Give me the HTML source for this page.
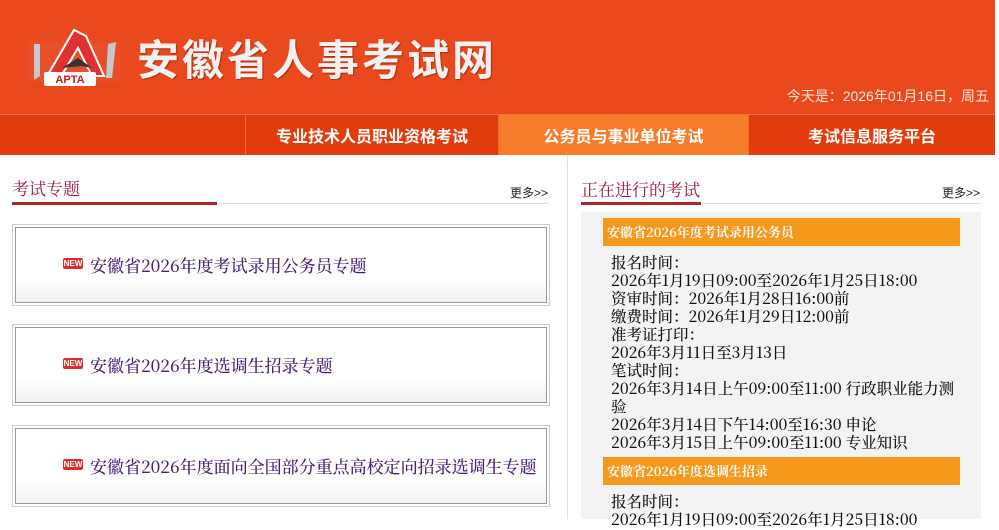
<!DOCTYPE html>
<html><head><meta charset="utf-8"><style>
*{margin:0;padding:0;box-sizing:border-box}
body{width:999px;height:519px;overflow:hidden;background:#fff;font-family:"Liberation Sans","Noto Sans CJK SC",sans-serif;position:relative}
.hdr{position:absolute;left:0;top:0;width:995px;height:114px;background:#e9491c}
.title{position:absolute;left:137px;top:30px;font-size:42px;font-weight:bold;color:#f4f0f0;letter-spacing:3px;font-family:"Noto Sans CJK SC",sans-serif;line-height:56px;text-shadow:1px 1px 1px #a03010}
.date{position:absolute;right:6px;top:86px;color:#fbe6d8;font-size:14px}
.nav{position:absolute;left:0;top:114px;width:995px;height:41px;background:#e23c0c;border-top:1px solid #f07040}
.nav div{position:absolute;top:0;height:40px;line-height:40px;text-align:center;color:#fff;font-weight:bold;font-size:16px;font-family:"Noto Sans CJK SC",sans-serif;border-left:1px solid #f06a3a}
.lt{position:absolute;font-size:17px;color:#9a1c3c;font-family:"Noto Serif CJK SC",serif}
.more{position:absolute;font-size:12px;color:#222}
.box{position:absolute;left:12px;width:538px;height:82px;border:1px solid #ccc;padding:2px}
.box .in{border:1px solid #999;height:100%;background:linear-gradient(#fff 70%,#f0f0f0)}
.box .t{position:absolute;left:77px;top:27px;font-size:17px;color:#4a2070;font-family:"Noto Serif CJK SC",serif;font-weight:500}
.new{position:absolute;left:50px;top:33px;width:20px;height:11px;background:#d83030;color:#fff;font-size:8px;line-height:11px;text-align:center;border-radius:2px;font-weight:bold}
.panel{position:absolute;left:581px;top:212px;width:400px;height:307px;background:#f3f3f3}
.bar{position:absolute;left:22px;width:357px;height:28px;background:#f7981d;color:#fff;font-weight:bold;font-size:13px;line-height:28px;padding-left:4px;font-family:"Noto Serif CJK SC",serif}
.txt{position:absolute;left:30px;font-size:15.5px;line-height:18px;color:#111;font-family:"Noto Serif CJK SC",serif;white-space:pre;font-weight:500}
</style></head><body>
<div class="hdr">
<svg style="position:absolute;left:26px;top:24px" width="96" height="66" viewBox="0 0 96 66">
<rect x="2" y="18" width="92" height="40" fill="#e05a40" opacity=".4"/>
<path d="M8 20 L14 20 L14 52 L8 56Z" fill="#c8c8cc"/><path d="M82 20 L90 18 L86 54 L80 54Z" fill="#c8c8cc"/>
<path d="M20 54 L48 6 L60 12 L78 52 L66 52 L52 24 L34 54Z" fill="#e03030" stroke="#fff" stroke-width="2"/>
<path d="M36 44 L52 34 L66 44 L56 42Z" fill="#333"/>
<rect x="18" y="48" width="52" height="14" rx="2" fill="#fff"/>
<text x="44" y="59" font-size="11" font-weight="bold" fill="#c02020" text-anchor="middle" font-family="Liberation Sans">APTA</text>
</svg>
<div class="title">安徽省人事考试网</div>
<div class="date">今天是：2026年01月16日，周五</div>
</div>
<div class="nav">
<div style="left:0;width:245px;border:0"></div>
<div style="left:245px;width:253px">专业技术人员职业资格考试</div>
<div style="left:498px;width:250px;background:#f77c2c">公务员与事业单位考试</div>
<div style="left:748px;width:247px">考试信息服务平台</div>
</div>
<div style="position:absolute;left:567px;top:155px;width:1px;height:364px;background:#e0e0e0"></div>
<div class="lt" style="left:12px;top:175px">考试专题</div>
<div class="more" style="left:510px;top:184px">更多&gt;&gt;</div>
<div style="position:absolute;left:12px;top:203px;width:536px;height:1px;background:#ddd"></div>
<div style="position:absolute;left:12px;top:202px;width:205px;height:3px;background:#a8282c"></div>
<div class="box" style="top:224px"><div class="in"></div><span class="new">NEW</span><span class="t">安徽省2026年度考试录用公务员专题</span></div>
<div class="box" style="top:324px"><div class="in"></div><span class="new">NEW</span><span class="t">安徽省2026年度选调生招录专题</span></div>
<div class="box" style="top:425px"><div class="in"></div><span class="new">NEW</span><span class="t">安徽省2026年度面向全国部分重点高校定向招录选调生专题</span></div>
<div class="lt" style="left:581px;top:176px">正在进行的考试</div>
<div class="more" style="left:942px;top:184px">更多&gt;&gt;</div>
<div style="position:absolute;left:581px;top:203px;width:400px;height:1px;background:#ddd"></div>
<div style="position:absolute;left:581px;top:202px;width:120px;height:3px;background:#a8282c"></div>
<div class="panel">
<div class="bar" style="top:6px">安徽省2026年度考试录用公务员</div>
<div class="txt" style="top:41px">报名时间：
2026年1月19日09:00至2026年1月25日18:00
资审时间：2026年1月28日16:00前
缴费时间：2026年1月29日12:00前
准考证打印：
2026年3月11日至3月13日
笔试时间：
2026年3月14日上午09:00至11:00 行政职业能力测
验
2026年3月14日下午14:00至16:30 申论
2026年3月15日上午09:00至11:00 专业知识</div>
<div class="bar" style="top:245px">安徽省2026年度选调生招录</div>
<div class="txt" style="top:280px">报名时间：
2026年1月19日09:00至2026年1月25日18:00</div>
</div>
</body></html>
